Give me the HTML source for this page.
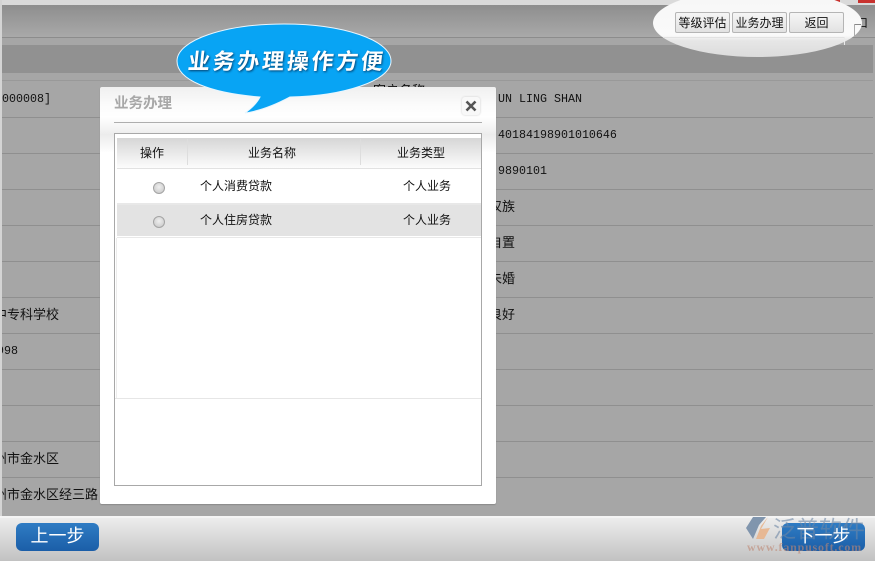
<!DOCTYPE html>
<html><head><meta charset="utf-8">
<style>
html,body{margin:0;padding:0}
body{width:875px;height:561px;overflow:hidden;position:relative;background:#a6a6a6;font-family:"Liberation Sans","Noto Sans CJK SC",sans-serif;font-size:12px;color:#111}
.a{position:absolute}
.t{position:absolute;white-space:nowrap;line-height:14px;font-size:12px;color:#111}
.b{font-size:13px}
.m{font-family:"Liberation Mono","Noto Sans CJK SC",monospace;font-size:11.67px}
.l{position:absolute;left:2px;width:871px;height:1px;background:#8f8f8f}
.btn{position:absolute;top:12px;width:53px;height:19px;border:1px solid #b5b5b5;border-radius:2px;background:linear-gradient(#f6f6f6,#e2e2e2);text-align:center;line-height:20px;font-size:12px;color:#111}
.blue{position:absolute;top:523px;width:83px;height:28px;border-radius:6px;background:linear-gradient(#2f7cc4,#1b5ea8)}
.bt{position:absolute;top:523px;width:83px;height:28px;color:#fff;font-size:18px;line-height:27px;text-align:center}
.radio{position:absolute;left:153px;width:10px;height:10px;border:1px solid #a4a4a4;border-radius:50%;background:radial-gradient(circle at 50% 40%,#efefef,#c4c4c4)}
</style></head><body>
<div class="a" style="left:0;top:0;width:875px;height:5px;background:#dadada"></div>
<div class="a" style="left:0;top:5px;width:875px;height:32px;background:linear-gradient(#8e8e8e,#a9a9a9)"></div>
<div class="a" style="left:0;top:37px;width:875px;height:1px;background:#8c8c8c"></div>
<div class="a" style="left:0;top:38px;width:875px;height:7px;background:#a6a6a6"></div>
<div class="a" style="left:2px;top:45px;width:871px;height:28px;background:#919191"></div>
<div class="a" style="left:810px;top:0;width:30px;height:4px;background:#c8322e"></div>
<div class="a" style="left:858px;top:0;width:17px;height:3px;background:#c8322e"></div>
<div class="l" style="top:117px"></div><div class="l" style="top:153px"></div><div class="l" style="top:189px"></div><div class="l" style="top:225px"></div><div class="l" style="top:261px"></div><div class="l" style="top:297px"></div><div class="l" style="top:333px"></div><div class="l" style="top:369px"></div><div class="l" style="top:405px"></div><div class="l" style="top:441px"></div><div class="l" style="top:477px"></div>
<div class="l" style="top:80px;background:#999"></div>
<div class="t m" style="left:2px;top:92px">000008]</div>
<div class="t b" style="left:-6px;top:308px">中专科学校</div>
<div class="t m" style="left:-10px;top:344px">1998</div>
<div class="t b" style="left:-19px;top:452px">郑州市金水区</div>
<div class="t b" style="left:-19px;top:488px">郑州市金水区经三路</div>
<div class="t m" style="left:498px;top:92px">UN LING SHAN</div>
<div class="t m" style="left:498px;top:128px">40184198901010646</div>
<div class="t m" style="left:498px;top:164px">9890101</div>
<div class="t b" style="left:489px;top:200px">汉族</div>
<div class="t b" style="left:489px;top:236px">自置</div>
<div class="t b" style="left:489px;top:272px">未婚</div>
<div class="t b" style="left:489px;top:308px">良好</div>
<div class="t b" style="left:373px;top:84px;height:3px;overflow:hidden">客户名称</div>
<div class="a" style="left:0;top:0;width:2px;height:516px;background:#d4d4d4"></div>
<div class="t" style="left:856px;top:16px">口</div>
<!-- top ellipse -->
<div class="a" style="left:653px;top:-11px;width:209px;height:68px;border-radius:50%;background:linear-gradient(#f6f6f6 0,#fafafa 68%,#e6e6e6 76%,#dcdcdc 100%)"></div>
<div class="a" style="left:663px;top:37px;width:181px;height:1px;background:#e2e2e2"></div>
<div class="a" style="left:844px;top:37px;width:1px;height:8px;background:#eaeaea"></div>
<div class="a" style="left:855px;top:24px;width:6px;height:1px;background:#888"></div>
<div class="a" style="left:854px;top:24px;width:1px;height:13px;background:#aaa"></div>
<div class="btn" style="left:675px">等级评估</div>
<div class="btn" style="left:732px">业务办理</div>
<div class="btn" style="left:789px">返回</div>
<!-- bottom bar -->
<div class="a" style="left:0;top:516px;width:875px;height:2px;background:#f4f4f4"></div>
<div class="a" style="left:0;top:518px;width:875px;height:43px;background:linear-gradient(#ededed,#c2c2c2)"></div>
<div class="blue" style="left:16px"></div>
<div class="bt" style="left:16px">上一步</div>
<div class="blue" style="left:782px"></div>
<svg class="a" style="left:744px;top:515px" width="30" height="28" viewBox="0 0 30 28"><path d="M9 2 L22 2 L15 10 L9 24 L2 13 Z" fill="#8095ad"/><path d="M24 2 L17 11 L12 24 L20 24 L26 13 L17 14 Z" fill="#e8b48c" opacity=".9"/></svg>
<div class="t" style="left:773px;top:516px;font-size:23px;line-height:26px;color:rgba(110,135,165,.6)">泛普软件</div>
<div class="t" style="left:747px;top:540px;font-family:'Liberation Serif',serif;font-size:12px;font-weight:bold;color:rgba(190,135,115,.6);letter-spacing:.8px">www.fanpusoft.com</div>
<div class="bt" style="left:782px">下一步</div>
<!-- dialog -->
<div class="a" style="left:100px;top:87px;width:396px;height:417px;background:linear-gradient(#f0f0f0 0,#fbfbfb 18px,#fff 30px,#ececec 48px,#fff 66px);border-radius:2px;box-shadow:0 1px 1px #8a8a8a"></div>
<div class="t" style="left:114px;top:96px;font-size:14.5px;line-height:17px;color:#a8a8a8;font-weight:bold">业务办理</div>
<div class="a" style="left:114px;top:122px;width:368px;height:1px;background:#aeaeae"></div>
<div class="a" style="left:462px;top:97px;width:18px;height:18px;background:#f8f8f8;border-radius:3px;box-shadow:0 0 2px #ccc"></div>
<svg class="a" style="left:462px;top:97px" width="18" height="18" viewBox="0 0 18 18"><path d="M4.5 4.5 L13.5 13.5 M13.5 4.5 L4.5 13.5" stroke="#555" stroke-width="2.6" fill="none"/></svg>
<div class="a" style="left:114px;top:133px;width:366px;height:351px;border:1px solid #a8a8a8;background:#fff"></div>
<div class="a" style="left:117px;top:138px;width:364px;height:30px;background:linear-gradient(#d6d6d6,#fcfcfc)"></div>
<div class="a" style="left:117px;top:168px;width:364px;height:1px;background:#e2e2e2"></div>
<div class="a" style="left:187px;top:139px;width:1px;height:26px;background:#ddd"></div>
<div class="a" style="left:360px;top:139px;width:1px;height:26px;background:#ddd"></div>
<div class="t" style="left:140px;top:146px">操作</div>
<div class="t" style="left:248px;top:146px">业务名称</div>
<div class="t" style="left:397px;top:146px">业务类型</div>
<div class="a" style="left:117px;top:203px;width:364px;height:2px;background:#e8e8e8"></div>
<div class="a" style="left:117px;top:205px;width:364px;height:31px;background:#e3e3e3"></div>
<div class="a" style="left:117px;top:237px;width:364px;height:1px;background:#e8e8e8"></div>
<div class="radio" style="top:182px"></div>
<div class="radio" style="top:216px"></div>
<div class="t" style="left:200px;top:179px">个人消费贷款</div>
<div class="t" style="left:403px;top:179px">个人业务</div>
<div class="t" style="left:200px;top:213px">个人住房贷款</div>
<div class="t" style="left:403px;top:213px">个人业务</div>
<div class="a" style="left:116px;top:238px;width:1px;height:160px;background:#ececec"></div>
<div class="a" style="left:115px;top:398px;width:366px;height:1px;background:#e6e6e6"></div>
<!-- bubble -->
<svg class="a" style="left:170px;top:18px" width="230" height="100" viewBox="0 0 230 100"><path d="M7 43 C7 22 55 6 114 6 C173 6 221 22 221 43 C221 63 173 78 120 79 C105 87 90 93 75 95 C82 90 87 85 90 79 C40 75 7 62 7 43 Z" fill="#08a4f4" stroke="#e8f6ff" stroke-width="1"/></svg>
<div class="t" style="left:188px;top:48px;font-size:22px;line-height:28px;font-weight:bold;letter-spacing:2.7px;color:#fff;text-shadow:1px 1px 2px #06406e;transform:skewX(-6deg)">业务办理操作方便</div>
</body></html>
